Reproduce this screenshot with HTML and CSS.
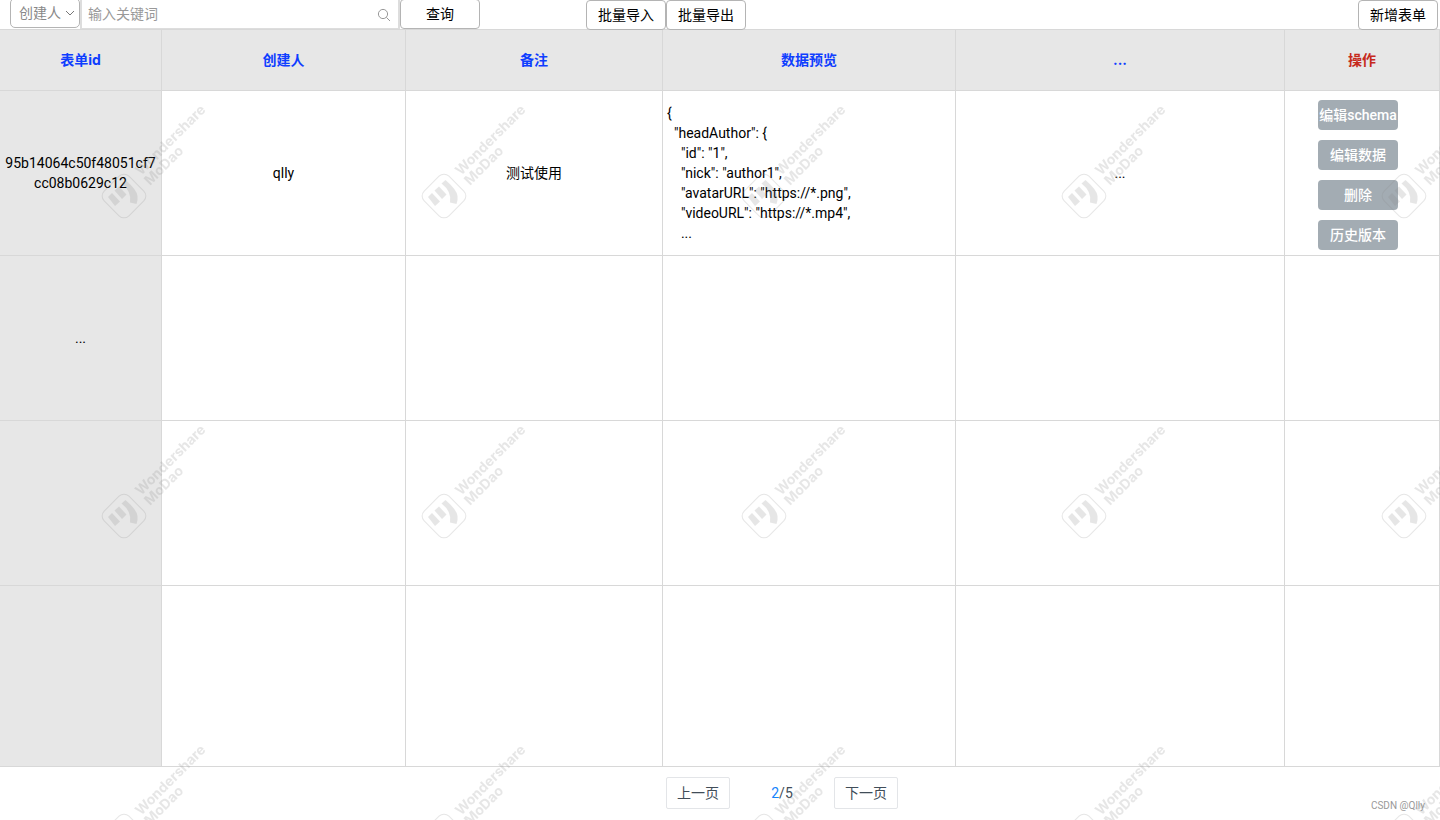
FILE: index.html
```html
<!DOCTYPE html>
<html lang="zh-CN">
<head>
<meta charset="utf-8">
<title>表单管理</title>
<link rel="stylesheet" href="styles.css">
</head>
<body>
<header class="toolbar">
  <div class="search">
    <div class="field">
      <select class="field-select" aria-label="查询字段">
        <option>创建人</option>
        <option>表单id</option>
        <option>备注</option>
      </select>
      <svg class="chevron" viewBox="0 0 10 6" aria-hidden="true"><path d="M1 1l4 4 4-4"/></svg>
    </div>
    <div class="keyword">
      <input class="keyword-input" type="text" placeholder="输入关键词" aria-label="关键词">
      <svg class="magnifier" viewBox="0 0 14 14" aria-hidden="true"><circle cx="6" cy="6" r="4.6"/><path d="M9.4 9.4l3.6 3.6"/></svg>
    </div>
    <button class="btn btn-query" type="button">查询</button>
  </div>
  <div class="batch">
    <button class="btn" type="button">批量导入</button>
    <button class="btn" type="button">批量导出</button>
  </div>
  <button class="btn btn-new" type="button">新增表单</button>
</header>

<main>
  <table class="forms">
    <colgroup>
      <col class="col-id"><col class="col-creator"><col class="col-note"><col class="col-preview"><col class="col-more"><col class="col-actions">
    </colgroup>
    <thead>
      <tr><th>表单id</th><th>创建人</th><th>备注</th><th>数据预览</th><th>...</th><th class="danger">操作</th></tr>
    </thead>
    <tbody>
      <tr>
        <td>95b14064c50f48051cf7cc08b0629c12</td>
        <td>qlly</td>
        <td>测试使用</td>
        <td class="preview-cell"><pre class="preview">{
  "headAuthor": {
    "id": "1",
    "nick": "author1",
    "avatarURL": "https://*.png",
    "videoURL": "https://*.mp4",
    ...</pre></td>
        <td>...</td>
        <td class="actions-cell">
          <div class="actions">
            <button class="action" type="button">编辑schema</button>
            <button class="action" type="button">编辑数据</button>
            <button class="action" type="button">删除</button>
            <button class="action" type="button">历史版本</button>
          </div>
        </td>
      </tr>
      <tr><td>...</td><td></td><td></td><td></td><td></td><td></td></tr>
      <tr><td></td><td></td><td></td><td></td><td></td><td></td></tr>
      <tr class="last"><td></td><td></td><td></td><td></td><td></td><td></td></tr>
    </tbody>
  </table>
</main>

<nav class="pager" aria-label="分页">
  <button class="page-btn" type="button">上一页</button>
  <span class="page-count"><span class="current">2</span>/5</span>
  <button class="page-btn" type="button">下一页</button>
</nav>

<div class="credit">CSDN @Qlly</div>

<svg class="watermark" aria-hidden="true">
  <defs>
    <pattern id="mark" width="320" height="320" patternUnits="userSpaceOnUse">
      <g transform="translate(124 196)">
        <rect class="mark-frame" x="-17.5" y="-17.5" width="35" height="35" rx="7" transform="rotate(45)"/>
        <path class="mark-fill" d="M-16 1l4-4 8 8.500-5 4.500zM-9.500-5.500l4.500-4 7.500 8-4.500 4.500zM-2.500-12.500l4-3.500Q13-6 13.500 0q.5 4-1 8l-6.500-1.500q2-11-8.500-19z"/>
      </g>
      <text class="mark-text" transform="translate(141 176) rotate(-45)">Wondershare</text>
      <text class="mark-text" transform="translate(150 186) rotate(-45)">MoDao</text>
    </pattern>
  </defs>
  <rect width="100%" height="100%" fill="url(#mark)"/>
</svg>
</body>
</html>
```

FILE: styles.css
```css
* {
  box-sizing: border-box;
}

body {
  margin: 0;
  min-height: 100vh;
  position: relative;
  overflow: hidden;
  background: #fff;
  color: #000;
  font-family: Roboto, "Noto Sans CJK SC", sans-serif;
  font-size: 14px;
  line-height: 20px;
}

button,
input,
select {
  font: inherit;
}

/* Toolbar */
.toolbar {
  position: relative;
  z-index: 1;
  display: flex;
  align-items: flex-start;
  height: 29px;
  padding: 0 2px 0 10px;
}

.search,
.batch {
  display: flex;
  align-items: flex-start;
}

.field {
  position: relative;
  margin-top: -2px;
}

.field-select {
  display: block;
  appearance: none;
  width: 70px;
  height: 30px;
  padding: 0 8px;
  border: 1px solid #b4b4b4;
  border-radius: 5px;
  background: #fff;
  color: #888;
}

.chevron {
  position: absolute;
  right: 5px;
  top: 12px;
  width: 10px;
  height: 6px;
  fill: none;
  stroke: #777;
}

.keyword {
  position: relative;
}

.keyword-input {
  display: block;
  width: 320px;
  height: 29px;
  padding: 0 28px 0 6px;
  border: solid #ddd;
  border-width: 0 2px 1px;
  background: #fff;
  color: #000;
}

.keyword-input::placeholder {
  color: #999;
  opacity: 1;
}

.magnifier {
  position: absolute;
  right: 9px;
  top: 8px;
  width: 14px;
  height: 14px;
  fill: none;
  stroke: #999;
}

.btn {
  width: 80px;
  height: 30px;
  padding: 0;
  border: 1px solid #b4b4b4;
  border-radius: 4px;
  background: #fff;
  color: #000;
}

.btn-query {
  margin-top: -1px;
}

.batch {
  margin-left: 106px;
}

.btn-new {
  margin-left: auto;
}

/* Table */
.forms {
  width: 100%;
  table-layout: fixed;
  border-collapse: separate;
  border-spacing: 0;
  border-top: 1px solid #d8d8d8;
}

.col-id { width: 162px; }
.col-creator { width: 244px; }
.col-note { width: 257px; }
.col-preview { width: 293px; }
.col-more { width: 329px; }
.col-actions { width: 155px; }

.forms th,
.forms td {
  padding: 0 5px;
  border: solid #d8d8d8;
  border-width: 0 1px 1px 0;
  text-align: center;
  vertical-align: middle;
  word-break: break-all;
}

.forms th {
  height: 61px;
  background: #e7e7e7;
  color: #0f3eff;
  font-family: Inter, "Noto Sans CJK SC", sans-serif;
  font-weight: 700;
}

.forms th.danger {
  color: #c62a1c;
}

.forms td {
  height: 165px;
}

.forms td:first-child {
  background: #e7e7e7;
}

.forms .last td {
  height: 181px;
}

.forms .preview-cell {
  padding: 0 4px;
}

.preview {
  margin: 0;
  font: inherit;
  text-align: left;
}

.forms .actions-cell {
  padding: 3px 41px 0 33px;
}

.actions {
  display: flex;
  flex-direction: column;
  gap: 10px;
}

.action {
  width: 100%;
  height: 30px;
  padding: 0;
  border: 0;
  border-radius: 4px;
  background: #a3acb3;
  color: #fff;
  font-weight: 500;
  white-space: nowrap;
}

/* Pager */
.pager {
  display: flex;
  align-items: center;
  justify-content: center;
  padding: 10px 0 10px 124px;
}

.page-btn {
  width: 64px;
  height: 32px;
  padding: 0;
  border: 1px solid #e3e5e8;
  border-radius: 2px;
  background: #fff;
  color: #414d58;
}

.page-count {
  width: 104px;
  text-align: center;
  color: #414d58;
}

.current {
  color: #1684fc;
}

.credit {
  position: absolute;
  right: 15px;
  bottom: 8px;
  color: #999;
  font-size: 10px;
  line-height: 12px;
}

/* Watermark */
.watermark {
  position: absolute;
  inset: 0;
  z-index: 2;
  width: 100%;
  height: 100%;
  opacity: 0.2;
  pointer-events: none;
}

.mark-frame {
  fill: none;
  stroke: #888;
}

.mark-fill {
  fill: #888;
}

.mark-text {
  fill: #888;
  font-family: Inter, sans-serif;
  font-size: 14px;
  font-weight: 700;
}
```
